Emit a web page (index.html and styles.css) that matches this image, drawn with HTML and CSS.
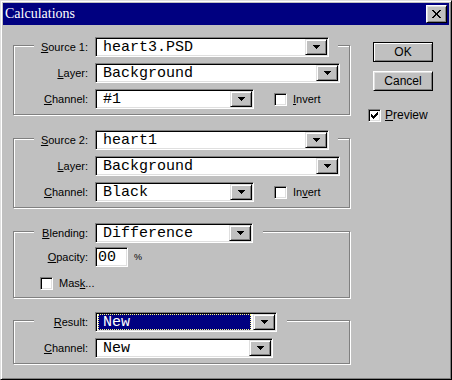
FILE: index.html
```html
<!DOCTYPE html>
<html>
<head>
<meta charset="utf-8">
<title>Calculations</title>
<link rel="stylesheet" href="styles.css">
</head>
<body>
<div class="win">
  <div class="titlebar">
    <span class="title">Calculations</span>
    <div class="close">
      <svg width="9" height="8" viewBox="0 0 9 8" shape-rendering="crispEdges"><path d="M0 0h2v1H0zM7 0h2v1H7zM1 1h2v1H1zM6 1h2v1H6zM2 2h2v1H2zM5 2h2v1H5zM3 3h3v1H3zM3 4h3v1H3zM2 5h2v1H2zM5 5h2v1H5zM1 6h2v1H1zM6 6h2v1H6zM0 7h2v1H0zM7 7h2v1H7z" fill="#000"/></svg>
    </div>
  </div>
  <div class="main">
    <div class="left">
      <div class="group g1">
        <div class="head">
          <span class="lbl"><u>S</u>ource 1:</span>
          <div class="combo w234"><span class="val">heart3.PSD</span><span class="dd"><svg width="7" height="4" viewBox="0 0 7 4" shape-rendering="crispEdges"><path d="M0 0h7v1h-1v1h-1v1h-1v1h-1v-1h-1v-1h-1v-1h-1z"/></svg></span></div>
        </div>
        <div class="row">
          <span class="lbl"><u>L</u>ayer:</span>
          <div class="combo w245"><span class="val">Background</span><span class="dd"><svg width="7" height="4" viewBox="0 0 7 4" shape-rendering="crispEdges"><path d="M0 0h7v1h-1v1h-1v1h-1v1h-1v-1h-1v-1h-1v-1h-1z"/></svg></span></div>
        </div>
        <div class="row">
          <span class="lbl"><u>C</u>hannel:</span>
          <div class="combo w159"><span class="val">#1</span><span class="dd"><svg width="7" height="4" viewBox="0 0 7 4" shape-rendering="crispEdges"><path d="M0 0h7v1h-1v1h-1v1h-1v1h-1v-1h-1v-1h-1v-1h-1z"/></svg></span></div>
          <span class="check inv"></span>
          <span class="clbl"><u>I</u>nvert</span>
        </div>
      </div>

      <div class="group g2">
        <div class="head">
          <span class="lbl"><u>S</u>ource 2:</span>
          <div class="combo w234"><span class="val">heart1</span><span class="dd"><svg width="7" height="4" viewBox="0 0 7 4" shape-rendering="crispEdges"><path d="M0 0h7v1h-1v1h-1v1h-1v1h-1v-1h-1v-1h-1v-1h-1z"/></svg></span></div>
        </div>
        <div class="row">
          <span class="lbl"><u>L</u>ayer:</span>
          <div class="combo w245"><span class="val">Background</span><span class="dd"><svg width="7" height="4" viewBox="0 0 7 4" shape-rendering="crispEdges"><path d="M0 0h7v1h-1v1h-1v1h-1v1h-1v-1h-1v-1h-1v-1h-1z"/></svg></span></div>
        </div>
        <div class="row">
          <span class="lbl"><u>C</u>hannel:</span>
          <div class="combo w159"><span class="val">Black</span><span class="dd"><svg width="7" height="4" viewBox="0 0 7 4" shape-rendering="crispEdges"><path d="M0 0h7v1h-1v1h-1v1h-1v1h-1v-1h-1v-1h-1v-1h-1z"/></svg></span></div>
          <span class="check inv"></span>
          <span class="clbl">In<u>v</u>ert</span>
        </div>
      </div>

      <div class="group g3">
        <div class="head">
          <span class="lbl"><u>B</u>lending:</span>
          <div class="combo w158"><span class="val">Difference</span><span class="dd"><svg width="7" height="4" viewBox="0 0 7 4" shape-rendering="crispEdges"><path d="M0 0h7v1h-1v1h-1v1h-1v1h-1v-1h-1v-1h-1v-1h-1z"/></svg></span></div>
        </div>
        <div class="row r-op">
          <span class="lbl"><u>O</u>pacity:</span>
          <div class="field"><span class="val">00</span></div>
          <span class="pct">%</span>
        </div>
        <div class="row r-mask">
          <span class="check"></span>
          <span class="clbl">Mas<u>k</u>...</span>
        </div>
      </div>

      <div class="group g4">
        <div class="head">
          <span class="lbl"><u>R</u>esult:</span>
          <div class="combo w182"><span class="val sel">New</span><span class="dd"><svg width="7" height="4" viewBox="0 0 7 4" shape-rendering="crispEdges"><path d="M0 0h7v1h-1v1h-1v1h-1v1h-1v-1h-1v-1h-1v-1h-1z"/></svg></span></div>
        </div>
        <div class="row">
          <span class="lbl"><u>C</u>hannel:</span>
          <div class="combo w178"><span class="val">New</span><span class="dd"><svg width="7" height="4" viewBox="0 0 7 4" shape-rendering="crispEdges"><path d="M0 0h7v1h-1v1h-1v1h-1v1h-1v-1h-1v-1h-1v-1h-1z"/></svg></span></div>
        </div>
      </div>
    </div>

    <div class="right">
      <div class="btn default">OK</div>
      <div class="btn cancel">Cancel</div>
      <div class="prev">
        <span class="check checked"><svg width="7" height="7" viewBox="0 0 7 7" shape-rendering="crispEdges"><path d="M6 0h1v3h-1v1h-1v1h-1v1h-1v1h-1v-1h-1v-1h-1v-3h1v1h1v1h1v-1h1v-1h1v-1h1z"/></svg></span>
        <span class="clbl"><u>P</u>review</span>
      </div>
    </div>
  </div>
</div>
</body>
</html>
```

FILE: styles.css
```css
html, body {
  margin: 0;
  padding: 0;
}

body {
  width: 452px;
  height: 380px;
  overflow: hidden;
  background: #c0c0c0;
  color: #000;
  font-family: "Liberation Sans", Arial, sans-serif;
  font-size: 11px;
}

u {
  text-decoration: underline;
  text-underline-offset: 1px;
}

.win {
  box-sizing: border-box;
  width: 452px;
  height: 380px;
  border: 1px solid;
  border-color: #dfdfdf #000 #000 #dfdfdf;
  box-shadow: inset 1px 1px 0 #fff, inset -1px -1px 0 #808080;
  padding: 2px;
  background: #c0c0c0;
  display: flex;
  flex-direction: column;
}

.titlebar {
  height: 22px;
  flex: none;
  background: #000080;
  display: flex;
  align-items: center;
  justify-content: space-between;
  padding: 0 2px;
}

.title {
  color: #fff;
  font-family: "Liberation Serif", "Times New Roman", serif;
  font-size: 14px;
  line-height: 16px;
}

.close {
  box-sizing: border-box;
  width: 21px;
  height: 18px;
  background: #c0c0c0;
  border: 1px solid;
  border-color: #fff #000 #000 #fff;
  box-shadow: inset 1px 1px 0 #dfdfdf, inset -1px -1px 0 #808080;
  display: flex;
  align-items: center;
  justify-content: center;
}

.main {
  display: flex;
  align-items: flex-start;
  padding-left: 10px;
}

.left {
  width: 338px;
  flex: none;
  padding-top: 20px;
}

.group {
  box-sizing: border-box;
  width: 337px;
  border: 1px solid #808080;
  box-shadow: 1px 1px 0 #fff, inset 1px 1px 0 #fff;
}

.g1 { padding-bottom: 5px; }
.g2 { margin-top: 23px; padding-bottom: 5px; }
.g3 { margin-top: 23px; padding-bottom: 4px; }
.g4 { margin-top: 22px; padding-bottom: 5px; }

.head {
  display: flex;
  align-items: center;
  width: fit-content;
  height: 20px;
  margin-top: -9px;
  margin-left: 20px;
  padding-right: 9px;
  background: #c0c0c0;
}

.g3 .head, .g4 .head { padding-right: 10px; }

.row {
  display: flex;
  align-items: center;
  height: 20px;
  margin-top: 6px;
  padding-left: 20px;
}

.r-op { margin-top: 4px; }
.r-mask { padding-left: 26px; }

.lbl {
  flex: none;
  width: 54px;
  margin-right: 7px;
  text-align: right;
  white-space: nowrap;
}

.combo {
  box-sizing: border-box;
  height: 20px;
  flex: none;
  display: flex;
  align-items: center;
  padding: 1px;
  background: #fff;
  border: 1px solid;
  border-color: #808080 #fff #fff #808080;
  box-shadow: inset 1px 1px 0 #000, inset -1px -1px 0 #dfdfdf;
}

.w234 { width: 234px; }
.w245 { width: 245px; }
.w159 { width: 159px; }
.w158 { width: 158px; }
.w182 { width: 182px; }
.w178 { width: 178px; }

.val {
  flex: 1;
  min-width: 0;
  height: 16px;
  padding-left: 6px;
  font-family: "Liberation Mono", "Courier New", monospace;
  font-size: 15px;
  line-height: 17px;
  white-space: nowrap;
  overflow: hidden;
}

.val.sel {
  box-sizing: border-box;
  margin: 0 2px 0 1px;
  padding-left: 4px;
  background: #000080;
  color: #fff;
  border: 1px dotted #ffff80;
  line-height: 15px;
}

.dd {
  box-sizing: border-box;
  flex: none;
  width: 22px;
  height: 16px;
  background: #c0c0c0;
  border: 1px solid;
  border-color: #dfdfdf #000 #000 #dfdfdf;
  box-shadow: inset 1px 1px 0 #fff, inset -1px -1px 0 #808080;
  display: flex;
  align-items: center;
  justify-content: center;
}

.field {
  box-sizing: border-box;
  width: 33px;
  height: 20px;
  flex: none;
  display: flex;
  align-items: center;
  padding: 1px;
  background: #fff;
  border: 1px solid;
  border-color: #808080 #fff #fff #808080;
  box-shadow: inset 1px 1px 0 #000, inset -1px -1px 0 #dfdfdf;
}

.field .val { padding-left: 1px; }

.pct {
  margin-left: 6px;
  font-size: 9px;
}

.check {
  box-sizing: border-box;
  flex: none;
  width: 13px;
  height: 13px;
  background: #fff;
  border: 1px solid;
  border-color: #808080 #fff #fff #808080;
  box-shadow: inset 1px 1px 0 #000, inset -1px -1px 0 #dfdfdf;
  display: flex;
  align-items: center;
  justify-content: center;
}

.check.inv { margin-left: 20px; }

.clbl {
  margin-left: 6px;
  white-space: nowrap;
}

.right {
  flex: none;
  margin-left: 17px;
  padding-top: 17px;
  display: flex;
  flex-direction: column;
}

.btn {
  box-sizing: border-box;
  width: 60px;
  height: 20px;
  margin-left: 5px;
  display: flex;
  align-items: center;
  justify-content: center;
  font-size: 12px;
  background: #c0c0c0;
}

.btn.default {
  border: 1px solid #000;
  box-shadow: inset 1px 1px 0 #fff, inset -1px -1px 0 #808080;
}

.btn.cancel {
  margin-top: 9px;
  border: 1px solid;
  border-color: #fff #000 #000 #fff;
  box-shadow: inset 1px 1px 0 #dfdfdf, inset -1px -1px 0 #808080;
}

.prev {
  display: flex;
  align-items: center;
  margin-top: 17px;
}

.prev .clbl {
  margin-left: 4px;
  font-size: 12px;
}
```
